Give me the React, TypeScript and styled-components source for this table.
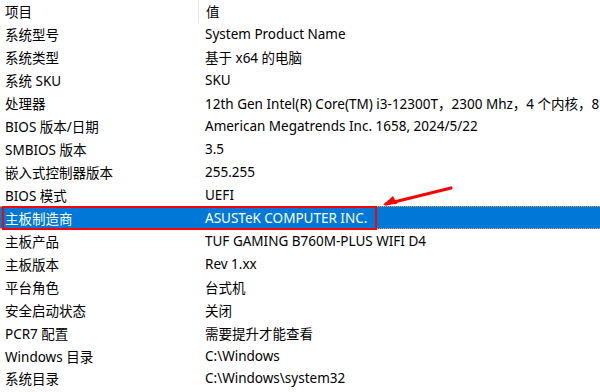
import React from "react";
import styled, { createGlobalStyle } from "styled-components";

const Global = createGlobalStyle`
  html, body { margin: 0; padding: 0; background: #fff; }
  body { width: 600px; height: 392px; overflow: hidden; }
`;

const Table = styled.div`
  width: 600px;
  height: 392px;
  overflow: hidden;
  font-family: "Segoe UI", "Noto Sans", "Noto Sans CJK SC", sans-serif;
  font-size: 13.5px;
  color: #000;
  position: relative;
`;

const Row = styled.div<{ $selected?: boolean }>`
  display: grid;
  grid-template-columns: 198px 1fr;
  height: 22.94px;
  align-items: center;
  white-space: nowrap;
  position: relative;
  background: ${(p) => (p.$selected ? "#0078d7" : "transparent")};
  color: ${(p) => (p.$selected ? "#fff" : "#000")};
  ${(p) =>
    p.$selected &&
    `
    &::before {
      content: "";
      position: absolute;
      inset: 0;
      border-top: 1px dotted #f0a050;
      border-bottom: 1px dotted #f0a050;
      pointer-events: none;
    }
  `}
`;

const Cell = styled.div<{ $divider?: boolean }>`
  padding-left: ${(p) => (p.$divider ? "7px" : "5px")};
  height: 100%;
  display: flex;
  align-items: center;
  overflow: hidden;
  ${(p) => p.$divider && `border-left: 1px solid #e5e5e5;`}
`;

const ValueCell = styled(Cell)`
  padding-left: 7px;
`;

const Highlight = styled.div`
  position: absolute;
  left: 2px;
  top: 206px;
  width: 371px;
  height: 20px;
  border: 2px solid #ff0000;
  pointer-events: none;
`;

const Arrow = styled.svg`
  position: absolute;
  left: 380px;
  top: 182px;
  pointer-events: none;
`;

const rows: [string, string][] = [
  ["系统型号", "System Product Name"],
  ["系统类型", "基于 x64 的电脑"],
  ["系统 SKU", "SKU"],
  ["处理器", "12th Gen Intel(R) Core(TM) i3-12300T，2300 Mhz，4 个内核，8"],
  ["BIOS 版本/日期", "American Megatrends Inc. 1658, 2024/5/22"],
  ["SMBIOS 版本", "3.5"],
  ["嵌入式控制器版本", "255.255"],
  ["BIOS 模式", "UEFI"],
  ["主板制造商", "ASUSTeK COMPUTER INC."],
  ["主板产品", "TUF GAMING B760M-PLUS WIFI D4"],
  ["主板版本", "Rev 1.xx"],
  ["平台角色", "台式机"],
  ["安全启动状态", "关闭"],
  ["PCR7 配置", "需要提升才能查看"],
  ["Windows 目录", "C:\\Windows"],
  ["系统目录", "C:\\Windows\\system32"],
];

export default function App() {
  return (
    <>
      <Global />
      <Table>
        <Row>
          <Cell>项目</Cell>
          <Cell $divider>值</Cell>
        </Row>
        {rows.map(([k, v]) => (
          <Row key={k} $selected={k === "主板制造商"}>
            <Cell>{k}</Cell>
            <ValueCell>{v}</ValueCell>
          </Row>
        ))}
        <Highlight />
        <Arrow width="80" height="30" viewBox="0 0 80 30">
          <path
            d="M71 6 L6 22"
            stroke="#ff0000"
            strokeWidth="3.2"
            strokeLinecap="round"
            fill="none"
          />
          <path d="M3 23 L13 14 L17 22 Z" fill="#ff0000" />
        </Arrow>
      </Table>
    </>
  );
}
